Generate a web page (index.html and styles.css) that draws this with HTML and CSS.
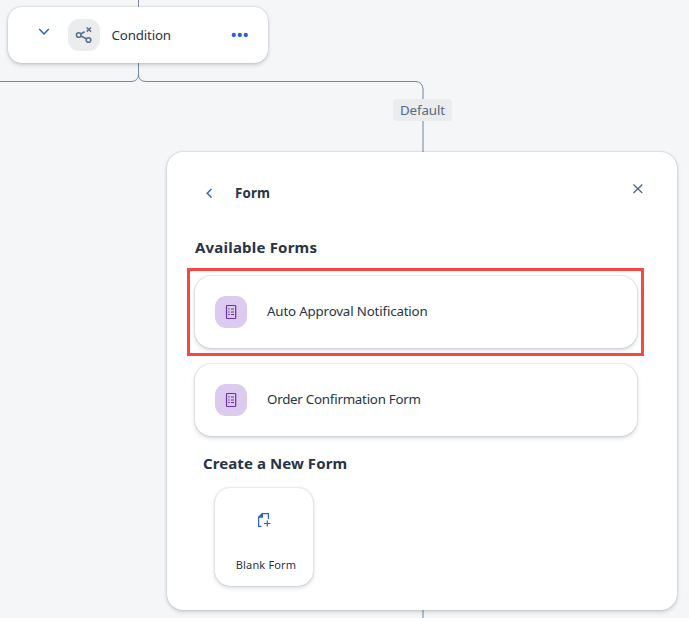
FILE: index.html
```html
<!DOCTYPE html>
<html lang="en">
<head>
<meta charset="utf-8">
<title>Form</title>
<link rel="stylesheet" href="styles.css">
</head>
<body>
<main class="canvas">
  <svg class="edges" width="689" height="618" fill="none">
    <path class="edge" d="M138.500 0V74Q138.500 81.500 131 81.500H0M138.500 74Q138.500 81.500 146 81.500H415Q423 81.500 423 90"/>
    <path class="edge-soft" d="M423 88V152M423 610V618"/>
  </svg>

  <section class="node">
    <svg class="chevron" width="12" height="8" viewBox="0 0 12 8"><path d="M1.200 1L6 6L10.800 1"/></svg>
    <span class="tile tile-gray">
      <svg class="condition" width="18" height="18" viewBox="0 0 18 18"><circle cx="3.700" cy="9" r="2.300"/><circle cx="13.500" cy="14" r="2.300"/><path d="M5.800 8L9.600 5.800M5.800 10L11.300 12.800M11.700 1.500L16 5.600M16 1.500L11.700 5.600"/></svg>
    </span>
    <span class="node-title">Condition</span>
    <svg class="dots" width="18" height="6" viewBox="0 0 18 6"><circle cx="2.800" cy="3" r="2.150"/><circle cx="8.800" cy="3" r="2.150"/><circle cx="14.800" cy="3" r="2.150"/></svg>
  </section>

  <span class="branch">Default</span>

  <section class="panel">
    <header class="panel-head">
      <svg class="back" width="8" height="10" viewBox="0 0 8 10"><path d="M6.500 1L2.200 5.200L6.500 9.400"/></svg>
      <h1>Form</h1>
      <svg class="close" width="12" height="12" viewBox="0 0 12 12"><path d="M1.500 1.500L10.300 10M10.300 1.500L1.500 10"/></svg>
    </header>
    <h2 class="available">Available Forms</h2>
    <div class="highlight">
      <div class="form-card">
        <span class="tile tile-purple"><svg class="list" width="12" height="16" viewBox="0 0 12 16"><rect x="1.500" y="1.500" width="9.200" height="13" rx=".7"/><path d="M3.200 5h1.600M6 5h3M3.200 8h1.600M6 8h3M3.200 10.500h1.600M6 10.500h3"/></svg></span>
        <span class="auto">Auto Approval Notification</span>
      </div>
    </div>
    <div class="form-card second">
      <span class="tile tile-purple"><svg class="list" width="12" height="16" viewBox="0 0 12 16"><rect x="1.500" y="1.500" width="9.200" height="13" rx=".7"/><path d="M3.200 5h1.600M6 5h3M3.200 8h1.600M6 8h3M3.200 10.500h1.600M6 10.500h3"/></svg></span>
      <span class="order">Order Confirmation Form</span>
    </div>
    <h2 class="create">Create a New Form</h2>
    <div class="blank-card">
      <svg class="add-doc" width="14" height="16" viewBox="0 0 14 16"><path d="M4.500 14.300H1.600V5.500L5.500 1.600H11.400V7M7 11.500H13.500M10.300 8.500V14.500"/><path class="fold" d="M1 5.800V5L5 1H6V5.800Z"/></svg>
      <span>Blank Form</span>
    </div>
  </section>
</main>
</body>
</html>
```
FILE: styles.css
```css
* { box-sizing: border-box; }
body {
  margin: 0;
  background: #f5f6f8;
  color: #263445;
  font: 13.300px/20px "Noto Sans", "Open Sans", sans-serif;
}
svg { display: block; flex: none; fill: none; }
h1, h2 { margin: 0; font-weight: 700; white-space: nowrap; }
span { white-space: nowrap; }
.canvas { position: relative; width: 689px; height: 618px; overflow: hidden; }
.edges { position: absolute; left: 0; top: 0; }
.edge { stroke: #7289a0; stroke-width: 1; }
.edge-soft { stroke: #b0bdcb; stroke-width: 2; }

.node {
  position: absolute;
  left: 8px;
  top: 7px;
  width: 260px;
  height: 56px;
  border-radius: 14px;
  background: #fff;
  box-shadow: 0 0 2px rgba(34, 53, 72, .25), 0 2px 4px rgba(34, 53, 72, .2);
  display: flex;
  align-items: center;
  padding: 0 20px 0 29px;
}
.chevron { margin: -6px 18.500px 0 .5px; stroke: #2860d8; stroke-width: 1.500; }
.tile {
  width: 32px;
  height: 32px;
  border-radius: 11px;
  display: flex;
  align-items: center;
  justify-content: center;
  flex: none;
}
.tile-gray { background: #eaecee; }
.tile-purple { background: #dccbee; }
.condition { stroke: #5b738b; stroke-width: 1.600; }
.node-title { margin-left: 11.500px; letter-spacing: -.15px; }
.dots { margin-left: auto; margin-right: -1px; fill: #2860d8; }

.branch {
  position: absolute;
  left: 393px;
  top: 99px;
  width: 59px;
  height: 22px;
  border-radius: 4px;
  background: #eaecee;
  color: #556b82;
  line-height: 22px;
  letter-spacing: -.1px;
  text-align: center;
}

.panel {
  position: absolute;
  left: 167px;
  top: 152px;
  width: 510px;
  height: 458px;
  border-radius: 16px;
  background: #fff;
  box-shadow: 0 0 2px rgba(34, 53, 72, .3), 0 2px 4px rgba(34, 53, 72, .18);
  padding: 31px 33px 0 20px;
}
.panel-head { display: flex; align-items: center; height: 20px; padding: 0 0 0 18px; }
.back { stroke: #2860d8; stroke-width: 1.400; }
.close { margin: -9px 0 0 auto; stroke: #556b82; stroke-width: 1.400; }
h1 { margin-left: 22px; font-size: 13.300px; line-height: 20px; letter-spacing: .15px; }
h2 { font-size: 15px; line-height: 22px; }
.available { margin: 33px 0 10px 8px; letter-spacing: .2px; }
.highlight { width: 457px; height: 88px; border: 3px solid #fb4444; padding: 5px; }
.form-card {
  width: 442px;
  height: 72px;
  border-radius: 16px;
  background: #fff;
  box-shadow: 0 0 2px rgba(34, 53, 72, .28), 0 2px 4px rgba(34, 53, 72, .2);
  display: flex;
  align-items: center;
  gap: 20px;
  padding: 0 20px;
}
.second { margin: 8px 0 0 8px; }
.auto { margin-top: -2px; letter-spacing: -.16px; }
.order { margin-top: -2px; letter-spacing: -.23px; }
.list { stroke: #6c32a9; stroke-width: 1.200; }
.create { margin: 16px 0 0 16px; letter-spacing: .08px; }
.blank-card {
  width: 98px;
  height: 98px;
  margin: 14px 0 0 28px;
  border-radius: 15px;
  box-shadow: 0 0 2px rgba(34, 53, 72, .28), 0 2px 4px rgba(34, 53, 72, .18);
  padding-top: 24px;
  font-size: 11px;
  display: flex;
  flex-direction: column;
  align-items: center;
}
.blank-card span { margin: 27px 0 0 4px; letter-spacing: .15px; }
.add-doc { stroke: #2860d8; stroke-width: 1.200; }
.add-doc .fold { fill: #2860d8; stroke: none; }
```
